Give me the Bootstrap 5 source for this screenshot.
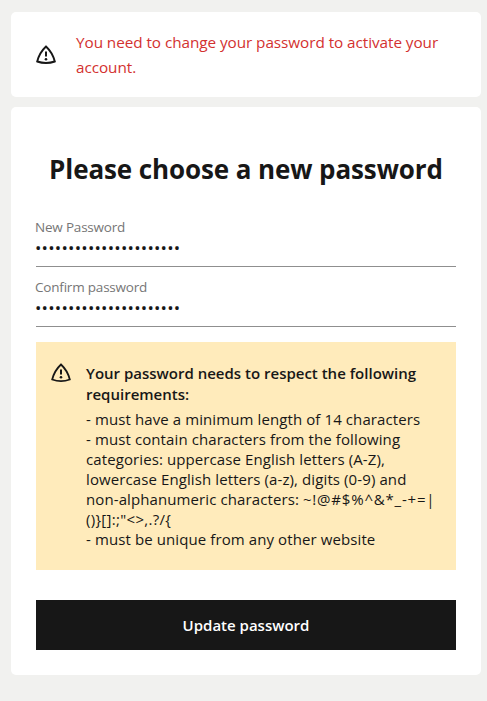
<!DOCTYPE html>
<html lang="en">
<head>
<meta charset="utf-8">
<meta name="viewport" content="width=device-width, initial-scale=1">
<title>Change password</title>
<link href="https://cdn.jsdelivr.net/npm/bootstrap@5.3.0/dist/css/bootstrap.min.css" rel="stylesheet">
<style>
body { background: #f1f1ef; color: #171717; font-family: "Open Sans", "Noto Sans", sans-serif; font-size: 15px; }
.page { width: 487px; padding: 12px 6px 0 11px; }
.panel { background: #fff; border-radius: 5px; }
.notice { height: 85px; padding-left: 25px; margin-bottom: 10px; gap: 20px; }
.notice p { color: #d3312f; line-height: 25px; font-size: 15.3px; letter-spacing: -.06px; }
.form-panel { height: 568px; padding: 45px 25px 0; }
h1 { font-size: 26px; line-height: 34px; font-weight: 700; letter-spacing: -.1px; margin-bottom: 31px; white-space: nowrap; }
.field { height: 60px; border-bottom: 1px solid #8f8f8f; padding-top: 10px; }
.field.first { height: 50px; padding-top: 0; }
.field label { display: block; color: #767676; font-size: 13.5px; line-height: 20px; letter-spacing: -.2px; margin-left: -1px; white-space: nowrap; }
.field input { height: 22px; padding: 0; border: 0; border-radius: 0; color: #171717; font-size: 17px; line-height: 22px; letter-spacing: .22px; margin-left: -1px; background: transparent; }
.rules { background: #ffebbb; height: 228px; margin-top: 15px; padding: 21px 0 0 15px; gap: 15px; }
.rules h2 { font-size: 15px; line-height: 21px; font-weight: 600; margin-bottom: 4px; white-space: nowrap; }
.rules p { font-size: 15px; letter-spacing: .1px; line-height: 20px; white-space: nowrap; }
.symbols { letter-spacing: .8px; }
.symbols-end { letter-spacing: .3px; }
.update, .update:hover { background: #171717; color: #fff; height: 50px; margin-top: 30px; font-size: 15px; font-weight: 600; }
</style>
</head>
<body>
<main class="page">
  <section class="panel notice d-flex align-items-center">
    <svg class="flex-shrink-0" width="20" height="20" viewBox="0 0 20 20" fill="none" stroke="#171717" stroke-width="1.9"><path d="M10 1.500C6 5.200 2.700 10.500 1.200 16.500Q10 19.600 18.800 16.500C17.300 10.500 14 5.200 10 1.500Z"/><path d="M10 6.500v5" stroke-width="2"/><circle cx="10" cy="14.200" r="1.300" fill="#171717" stroke="none"/></svg>
    <p class="mb-0"><span class="text-nowrap">You need to change your password to activate your</span><br>account.</p>
  </section>
  <section class="panel form-panel">
    <h1 class="text-center">Please choose a new password</h1>
    <form>
      <div class="field first"><label for="new">New Password</label><input class="form-control shadow-none" id="new" type="password" value="abcdefghijklmnopqrstuv"></div>
      <div class="field"><label for="confirm">Confirm password</label><input class="form-control shadow-none" id="confirm" type="password" value="abcdefghijklmnopqrstuv"></div>
      <div class="rules d-flex align-items-start">
        <svg class="flex-shrink-0" width="20" height="20" viewBox="0 0 20 20" fill="none" stroke="#171717" stroke-width="1.8"><path d="M10 1.500C6 5.200 2.700 10.500 1.200 16.500Q10 19.600 18.800 16.500C17.300 10.500 14 5.200 10 1.500Z"/><path d="M10 6.500v5" stroke-width="2"/><circle cx="10" cy="14.200" r="1.300" fill="#171717" stroke="none"/></svg>
        <div>
          <h2>Your password needs to respect the following<br>requirements:</h2>
          <p class="mb-0">- must have a minimum length of 14 characters<br>- must contain characters from the following<br>categories: uppercase English letters (A-Z),<br>lowercase English letters (a-z), digits (0-9) and<br>non-alphanumeric characters: <span class="symbols">~!@#$%^&amp;*_-+=|</span><br><span class="symbols-end">()}[]:;"&lt;&gt;,.?/{</span><br>- must be unique from any other website</p>
        </div>
      </div>
      <button type="button" class="btn update rounded-0 border-0 w-100">Update password</button>
    </form>
  </section>
</main>
<script src="https://cdn.jsdelivr.net/npm/bootstrap@5.3.0/dist/js/bootstrap.bundle.min.js"></script>
</body>
</html>
